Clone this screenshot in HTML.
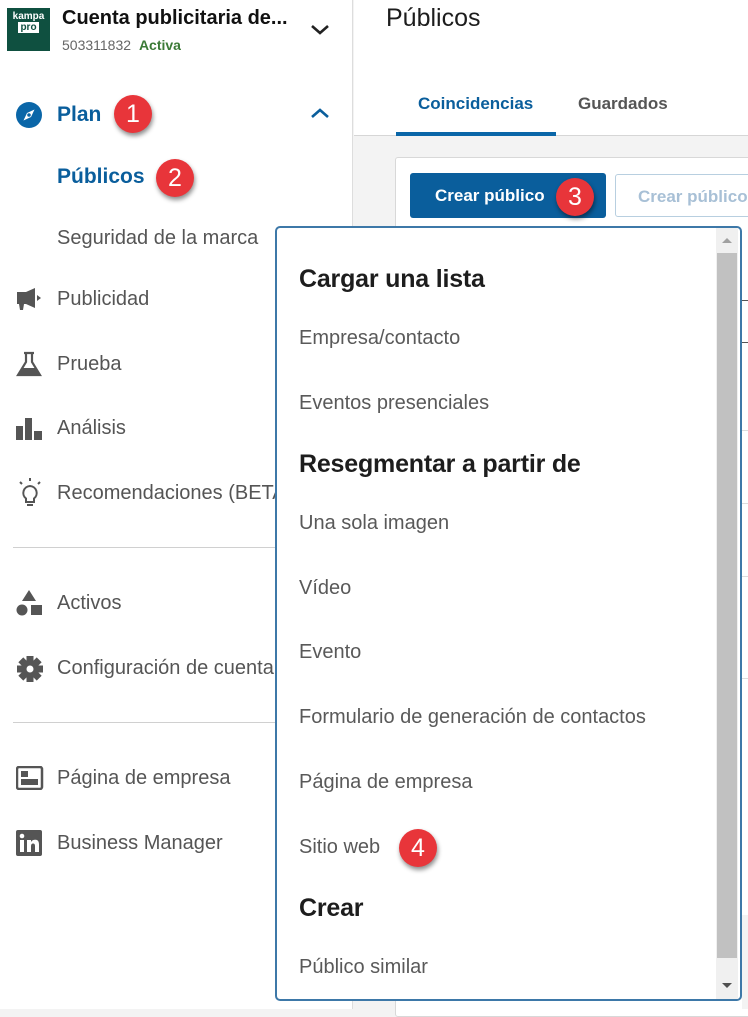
<!DOCTYPE html>
<html><head><meta charset="utf-8">
<style>
*{box-sizing:border-box;margin:0;padding:0}
body{width:748px;height:1009px;overflow:hidden;position:relative;background:#f3f3f3;font-family:"Liberation Sans",sans-serif;}
.abs{position:absolute}
.side{left:0;top:0;width:353px;height:1009px;background:#fff;border-right:1px solid #ddd}
.hdr{left:354px;top:0;width:394px;height:136px;background:#fff;border-bottom:1px solid #d6d6d6}
.item{position:absolute;left:57px;font-size:20px;color:#555;white-space:nowrap;line-height:24px}
.ic{position:absolute;left:16px}
.badge{position:absolute;width:38px;height:38px;border-radius:50%;background:#e8353a;color:#fff;font-size:25px;text-align:center;line-height:38px;box-shadow:1px 3px 5px rgba(0,0,0,.45)}
.dd{left:275px;top:226px;width:467px;height:775px;background:#fff;border:2px solid #3d78a8;border-radius:5px}
.mi{position:absolute;left:22px;font-size:20px;color:#595959;white-space:nowrap;line-height:24px}
.mh{position:absolute;left:22px;font-size:25px;color:#1d1d1d;font-weight:bold;white-space:nowrap;line-height:30px;letter-spacing:-.2px}
</style></head><body>
<div class="abs side"></div>
<div class="abs hdr"></div>
<!-- logo -->
<div class="abs" style="left:7px;top:8px;width:43px;height:43px;background:#0f5040;color:#fff;font-size:10px;text-align:center;line-height:11px;padding-top:3px;font-weight:bold">kampa<br><span style="background:#fff;color:#0f5040;padding:0 2px">pro</span></div>
<div class="abs" style="left:62px;top:7px;font-size:20px;font-weight:bold;color:#111;white-space:nowrap">Cuenta publicitaria de...</div>
<div class="abs" style="left:62px;top:37px;font-size:14px;color:#666">503311832 <b style="color:#3b7a36;margin-left:4px">Activa</b></div>
<svg class="abs" style="left:309px;top:22px" width="22" height="14"><path d="M3 4l8 7 8-7" stroke="#222" stroke-width="2.6" fill="none"/></svg>
<!-- Plan -->
<svg class="ic" style="top:102px" width="26" height="26"><circle cx="13" cy="13" r="13" fill="#0a66a8"/><path d="M18.5 7.5L11 11 7.5 18.5 15 15z" fill="#fff"/><circle cx="13" cy="13" r="1.8" fill="#0a66a8"/></svg>
<div class="item" style="top:103px;color:#0a5e9c;font-weight:bold;font-size:21px">Plan</div>
<svg class="abs" style="left:309px;top:106px" width="22" height="14"><path d="M3 11l8-7 8 7" stroke="#0a5e9c" stroke-width="2.6" fill="none"/></svg>
<div class="item" style="top:165px;color:#0a5e9c;font-weight:bold;font-size:21px">Públicos</div>
<div class="item" style="top:226px">Seguridad de la marca</div>
<svg class="ic" style="top:287px" width="26" height="24"><path d="M1 5h9l9-4v20l-9-4H8l-1 6H4l-1-6H1z" fill="#555"/><path d="M21 8l4 3-4 3z" fill="#555"/></svg>
<div class="item" style="top:287px">Publicidad</div>
<svg class="ic" style="top:351px" width="26" height="26"><path d="M8 2h10M10 2v9L2 24h22L16 11V2" stroke="#555" stroke-width="2.2" fill="none"/><path d="M6 17h14l3 6H3z" fill="#555"/></svg>
<div class="item" style="top:352px">Prueba</div>
<svg class="ic" style="top:416px" width="28" height="24"><rect x="0" y="10" width="7" height="14" fill="#555"/><rect x="9" y="2" width="7" height="22" fill="#555"/><rect x="18" y="15" width="8" height="9" fill="#555"/></svg>
<div class="item" style="top:416px">Análisis</div>
<svg class="ic" style="top:477px" width="28" height="30"><path d="M14 9a7 7 0 0 0-4 12.5V25h8v-3.5A7 7 0 0 0 14 9z" stroke="#555" stroke-width="2" fill="none"/><path d="M11 28h6M4 5l2 2M24 5l-2 2M14 1v3" stroke="#555" stroke-width="2"/></svg>
<div class="item" style="top:481px">Recomendaciones (BETA)</div>
<div class="abs" style="left:13px;top:547px;width:327px;height:1px;background:#d0d0d0"></div>
<svg class="ic" style="top:589px" width="28" height="28"><path d="M13 1l7 11H6z" fill="#555"/><circle cx="6" cy="21" r="5.5" fill="#555"/><rect x="15" y="16" width="11" height="10" fill="#555"/></svg>
<div class="item" style="top:591px">Activos</div>
<svg class="ic" style="top:655px" width="28" height="28"><g fill="#555" transform="translate(14 14)"><circle r="9"/><rect x="-3.5" y="-13" width="7" height="26"/><rect x="-3.5" y="-13" width="7" height="26" transform="rotate(45)"/><rect x="-3.5" y="-13" width="7" height="26" transform="rotate(90)"/><rect x="-3.5" y="-13" width="7" height="26" transform="rotate(135)"/></g><circle cx="14" cy="14" r="3.5" fill="#fff"/></svg>
<div class="item" style="top:656px">Configuración de cuenta</div>
<div class="abs" style="left:13px;top:722px;width:327px;height:1px;background:#d0d0d0"></div>
<svg class="ic" style="top:766px" width="28" height="24"><rect x="1" y="1" width="25" height="22" rx="2" stroke="#555" stroke-width="2.5" fill="none"/><rect x="5" y="5" width="7" height="6" fill="#555"/><rect x="5" y="13" width="17" height="6" fill="#555"/></svg>
<div class="item" style="top:766px">Página de empresa</div>
<svg class="ic" style="top:830px" width="26" height="26"><rect width="26" height="26" rx="2" fill="#555"/><rect x="4" y="10" width="4" height="12" fill="#fff"/><circle cx="6" cy="6" r="2.3" fill="#fff"/><path d="M11 10h4v2c1-2 3-2.5 5-2.2 2.5.5 3 2.5 3 5V22h-4v-6c0-2-1-2.5-2-2.5s-2 .8-2 2.5v6h-4z" fill="#fff"/></svg>
<div class="item" style="top:831px">Business Manager</div>

<!-- header right -->
<div class="abs" style="left:386px;top:4px;font-size:25px;color:#1d1d1d">Públicos</div>
<div class="abs" style="left:418px;top:94px;font-size:17px;color:#0a5e9c;font-weight:bold">Coincidencias</div>
<div class="abs" style="left:578px;top:94px;font-size:17px;color:#555;font-weight:bold">Guardados</div>
<div class="abs" style="left:396px;top:132px;width:160px;height:4px;background:#0a66a8"></div>
<div class="abs" style="left:395px;top:157px;width:360px;height:860px;background:#fff;border:1px solid #d8d8d8;border-radius:3px"></div>
<div class="abs" style="left:410px;top:173px;width:196px;height:45px;background:#0a5e9c;border-radius:3px;color:#fff;font-size:17px;font-weight:bold;padding:13px 0 0 25px">Crear público</div>
<div class="abs" style="left:615px;top:174px;width:140px;height:43px;border:1px solid #b8cfe0;border-radius:3px;color:#a8c0d6;font-size:17px;font-weight:bold;padding:12px 0 0 22px;white-space:nowrap;overflow:hidden">Crear público</div>
<div class="abs" style="left:742px;top:300px;width:6px;height:1px;background:#555"></div>
<div class="abs" style="left:742px;top:342px;width:6px;height:1px;background:#555"></div>
<div class="abs" style="left:742px;top:430px;width:6px;height:1px;background:#ddd"></div>
<div class="abs" style="left:742px;top:503px;width:6px;height:1px;background:#ddd"></div>
<div class="abs" style="left:742px;top:576px;width:6px;height:1px;background:#ddd"></div>
<div class="abs" style="left:742px;top:678px;width:6px;height:1px;background:#ddd"></div>
<div class="abs" style="left:742px;top:915px;width:6px;height:94px;background:#f3f3f3"></div>

<!-- dropdown -->
<div class="abs dd">
  <div class="abs" style="left:439px;top:0;width:22px;height:771px;background:#f0f0f0"></div>
  <div class="abs" style="left:440px;top:25px;width:20px;height:705px;background:#c1c1c1"></div>
  <svg class="abs" style="left:443px;top:8px" width="14" height="8"><path d="M2 7l5-5 5 5z" fill="#a0a0a0"/></svg>
  <svg class="abs" style="left:443px;top:754px" width="14" height="8"><path d="M2 1l5 5 5-5z" fill="#505050"/></svg>
  <div class="mh" style="top:36px">Cargar una lista</div>
  <div class="mi" style="top:98px">Empresa/contacto</div>
  <div class="mi" style="top:163px">Eventos presenciales</div>
  <div class="mh" style="top:221px">Resegmentar a partir de</div>
  <div class="mi" style="top:283px">Una sola imagen</div>
  <div class="mi" style="top:348px">Vídeo</div>
  <div class="mi" style="top:412px">Evento</div>
  <div class="mi" style="top:477px">Formulario de generación de contactos</div>
  <div class="mi" style="top:542px">Página de empresa</div>
  <div class="mi" style="top:607px">Sitio web</div>
  <div class="mh" style="top:665px">Crear</div>
  <div class="mi" style="top:727px">Público similar</div>
</div>

<div class="badge" style="left:114px;top:95px">1</div>
<div class="badge" style="left:156px;top:159px">2</div>
<div class="badge" style="left:556px;top:178px">3</div>
<div class="badge" style="left:399px;top:829px">4</div>
</body></html>
